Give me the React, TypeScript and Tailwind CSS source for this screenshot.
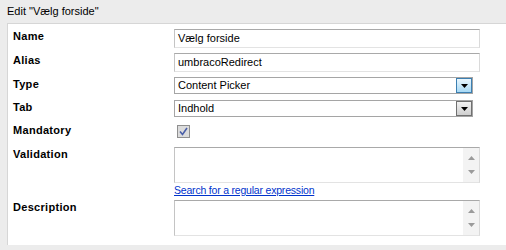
import React from "react";

const font = { fontFamily: '"Liberation Sans", Arial, sans-serif' };

function Label({ children }: { children: React.ReactNode }) {
  return (
    <div className="w-[166px] shrink-0 pl-[5px] text-[11px] leading-[14px] font-bold tracking-[0.3px] text-black">
      {children}
    </div>
  );
}

function TextBox({ value }: { value: string }) {
  return (
    <div className="h-[19px] w-[306px] border border-t-[#a9a9a9] border-l-[#c4c4c4] border-b-[#e3e3e3] border-r-[#dadada] bg-white pl-[3px] text-[11px] leading-[17px] text-black">
      {value}
    </div>
  );
}

function Select({ value, active }: { value: string; active?: boolean }) {
  return (
    <div className="flex h-[17px] w-[299px] items-stretch border border-[#a5a5a5] bg-white">
      <div className="flex-1 pl-[3px] text-[11px] leading-[15px] text-black">{value}</div>
      <div
        className={
          active
            ? "flex w-[16px] items-center justify-center border border-[#3c7fb1] bg-gradient-to-b from-[#eaf6fd] to-[#a7d9f5]"
            : "flex w-[16px] items-center justify-center border border-[#707070] bg-gradient-to-b from-[#f2f2f2] to-[#cfcfcf]"
        }
      >
        <svg width="7" height="4" viewBox="0 0 7 4">
          <path d="M0 0h7L3.5 4z" fill="#000" />
        </svg>
      </div>
    </div>
  );
}

function TextArea() {
  return (
    <div className="flex h-[36px] w-[306px] border border-t-[#a9a9a9] border-l-[#c4c4c4] border-b-[#e3e3e3] border-r-[#dadada] bg-white">
      <div className="flex-1" />
      <div className="flex w-[16px] flex-col items-center justify-between bg-[#f3f3f3] py-[8px]">
        <svg width="7" height="4" viewBox="0 0 7 4">
          <path d="M3.5 0L7 4H0z" fill="#9a9a9a" />
        </svg>
        <svg width="7" height="4" viewBox="0 0 7 4">
          <path d="M0 0h7L3.5 4z" fill="#9a9a9a" />
        </svg>
      </div>
    </div>
  );
}

export default function App() {
  return (
    <div className="h-[250px] w-[506px] overflow-hidden bg-[#ececec]" style={font}>
      <div className="h-[23px] pl-[7px] pt-[4px] text-[11px] leading-[14px] text-black">
        Edit "Vælg forside"
      </div>
      <div className="ml-[7px] h-[222px] border-l border-t border-[#d6d6d6] bg-white pt-[5px]">
        <div className="flex">
          <Label>Name</Label>
          <TextBox value="Vælg forside" />
        </div>
        <div className="mt-[5px] flex">
          <Label>Alias</Label>
          <TextBox value="umbracoRedirect" />
        </div>
        <div className="mt-[5px] flex">
          <Label>Type</Label>
          <Select value="Content Picker" active />
        </div>
        <div className="mt-[6px] flex">
          <Label>Tab</Label>
          <Select value="Indhold" />
        </div>
        <div className="mt-[6px] flex">
          <Label>Mandatory</Label>
          <div className="ml-[3px] mt-[2px] flex h-[13px] w-[13px] items-center justify-center border border-[#8f8f8f] bg-[#dcdcdc]">
            <svg width="9" height="9" viewBox="0 0 9 9">
              <path d="M1 4.5l2.5 3L8 1" stroke="#4a5fa8" strokeWidth="1.6" fill="none" />
            </svg>
          </div>
        </div>
        <div className="mt-[9px] flex">
          <Label>Validation</Label>
          <div className="flex flex-col">
            <TextArea />
            <a href="#" className="mt-[1px] text-[10.5px] leading-[12px] tracking-[-0.2px] text-[#0033cc] underline">
              Search for a regular expression
            </a>
          </div>
        </div>
        <div className="mt-[4px] flex">
          <Label>Description</Label>
          <TextArea />
        </div>
      </div>
    </div>
  );
}
